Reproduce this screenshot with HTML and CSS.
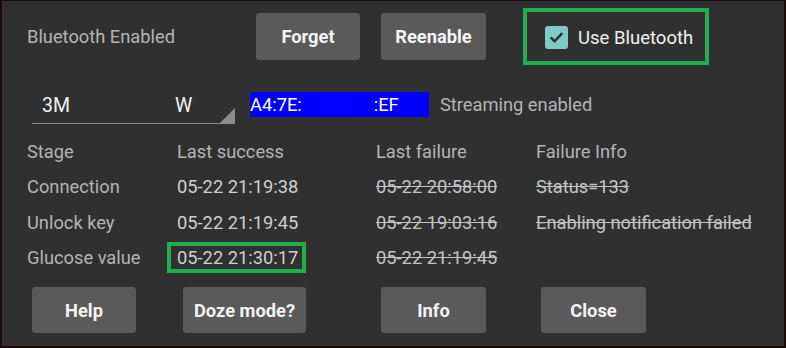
FILE: index.html
```html
<!DOCTYPE html>
<html lang="en">
<head>
    <meta charset="UTF-8">
    <meta name="viewport" content="width=device-width, initial-scale=1.0">
    <title>Bluetooth</title>
    <link rel="stylesheet" href="styles.css">
</head>
<body>
    <div class="dialog">
        <div class="top-row">
            <span class="label enabled-label">Bluetooth Enabled</span>
            <button class="btn btn-forget">Forget</button>
            <button class="btn btn-reenable">Reenable</button>
            <div class="mark use-box">
                <span class="check">
                    <svg width="24" height="24" viewBox="0 0 24 24">
                        <path d="M6 12.5l4 4 8-8.5" fill="none" stroke="#263238" stroke-width="2.6"/>
                    </svg>
                </span>
                <span class="use-text">Use Bluetooth</span>
            </div>
        </div>

        <div class="device-row">
            <div class="spinner">
                <span class="sp-a">3M</span>
                <span class="sp-b">W</span>
                <span class="sp-arrow"></span>
            </div>
            <div class="address">
                <span>A4:7E:</span>
                <span class="addr-end">:EF</span>
            </div>
            <span class="label">Streaming enabled</span>
        </div>

        <div class="table">
            <span class="label">Stage</span>
            <span class="label">Last success</span>
            <span class="label">Last failure</span>
            <span class="label">Failure Info</span>

            <span class="label">Connection</span>
            <span class="value">05-22 21:19:38</span>
            <span class="value fail">05-22 20:58:00</span>
            <span class="value fail">Status=133</span>

            <span class="label">Unlock key</span>
            <span class="value">05-22 21:19:45</span>
            <span class="value fail">05-22 19:03:16</span>
            <span class="value fail">Enabling notification failed</span>

            <span class="label">Glucose value</span>
            <span><span class="value mark glucose-box">05-22 21:30:17</span></span>
            <span class="value fail">05-22 21:19:45</span>
            <span></span>
        </div>

        <div class="bottom-row">
            <button class="btn btn-help">Help</button>
            <button class="btn btn-doze">Doze mode?</button>
            <button class="btn btn-info">Info</button>
            <button class="btn btn-close">Close</button>
        </div>
    </div>
</body>
</html>
```

FILE: styles.css
```css
body {
    margin: 0;
    background-color: #1c0b0b;
    font-family: Roboto, "Liberation Sans", sans-serif;
    font-size: 18.3px;
}
.dialog {
    margin: 1px 0 0 2px;
    width: 782px;
    height: 345px;
    background-color: #303030;
    box-sizing: border-box;
    padding-top: 7px;
}
.label {
    color: #b4b4b4;
}
.value {
    color: #cfcfcf;
}
.fail {
    color: #c4c4c4;
    text-decoration: line-through;
}
.btn {
    background-color: #5a5a5a;
    color: #f4f4f4;
    border: none;
    border-radius: 3px;
    font-family: Roboto, "Liberation Sans", sans-serif;
    font-size: 18.3px;
    font-weight: 700;
    height: 47px;
    padding: 0;
}
.mark {
    border: 4px solid #20b04b;
    box-sizing: border-box;
}

.top-row {
    display: flex;
    align-items: center;
    padding-left: 25px;
    height: 57px;
}
.enabled-label {
    width: 229px;
}
.btn-forget {
    width: 104px;
    margin-right: 21px;
}
.btn-reenable {
    width: 105px;
    margin-right: 37px;
}
.use-box {
    width: 186px;
    height: 57px;
    display: flex;
    align-items: center;
    padding-left: 18px;
    padding-top: 2px;
    margin-top: -1px;
}
.check {
    width: 23px;
    height: 23px;
    border-radius: 3px;
    background-color: #7fcac3;
    display: flex;
    align-items: center;
    justify-content: center;
    margin-right: 10px;
}
.use-text {
    color: #f0f0f0;
    font-size: 18.5px;
    margin-top: 2px;
}

.device-row {
    display: flex;
    align-items: center;
    margin-top: 21px;
    padding-left: 30px;
    height: 36px;
}
.spinner {
    width: 203px;
    height: 36px;
    border-bottom: 1px solid #8a8a8a;
    box-sizing: border-box;
    display: flex;
    align-items: center;
    padding-left: 10px;
    color: #f0f0f0;
    font-size: 19.5px;
    position: relative;
    margin-top: 4px;
}
.sp-a {
    width: 133px;
}
.sp-arrow {
    position: absolute;
    right: 0;
    bottom: 0;
    width: 0;
    height: 0;
    border-left: 15px solid transparent;
    border-bottom: 15px solid #8c8c8c;
}
.address {
    margin-left: 15px;
    width: 179px;
    height: 25px;
    background-color: #0000ff;
    color: #ffffff;
    display: flex;
    align-items: center;
    margin-right: 11px;
}
.addr-end {
    margin-left: 72px;
}

.table {
    display: grid;
    grid-template-columns: 150px 199px 160px 1fr;
    grid-template-rows: 36px 35px 36px 35px;
    align-items: center;
    padding-left: 25px;
    margin-top: 11px;
}
.glucose-box {
    display: inline-block;
    height: 31px;
    line-height: 23px;
    padding: 0 4px 0 6px;
    margin-left: -10px;
}

.bottom-row {
    display: flex;
    padding-left: 30px;
    margin-top: 12px;
}
.bottom-row .btn {
    height: 46px;
}
.btn-help {
    width: 104px;
    margin-right: 47px;
}
.btn-doze {
    width: 123px;
    margin-right: 75px;
}
.btn-info {
    width: 105px;
    margin-right: 55px;
}
.btn-close {
    width: 105px;
}
```
